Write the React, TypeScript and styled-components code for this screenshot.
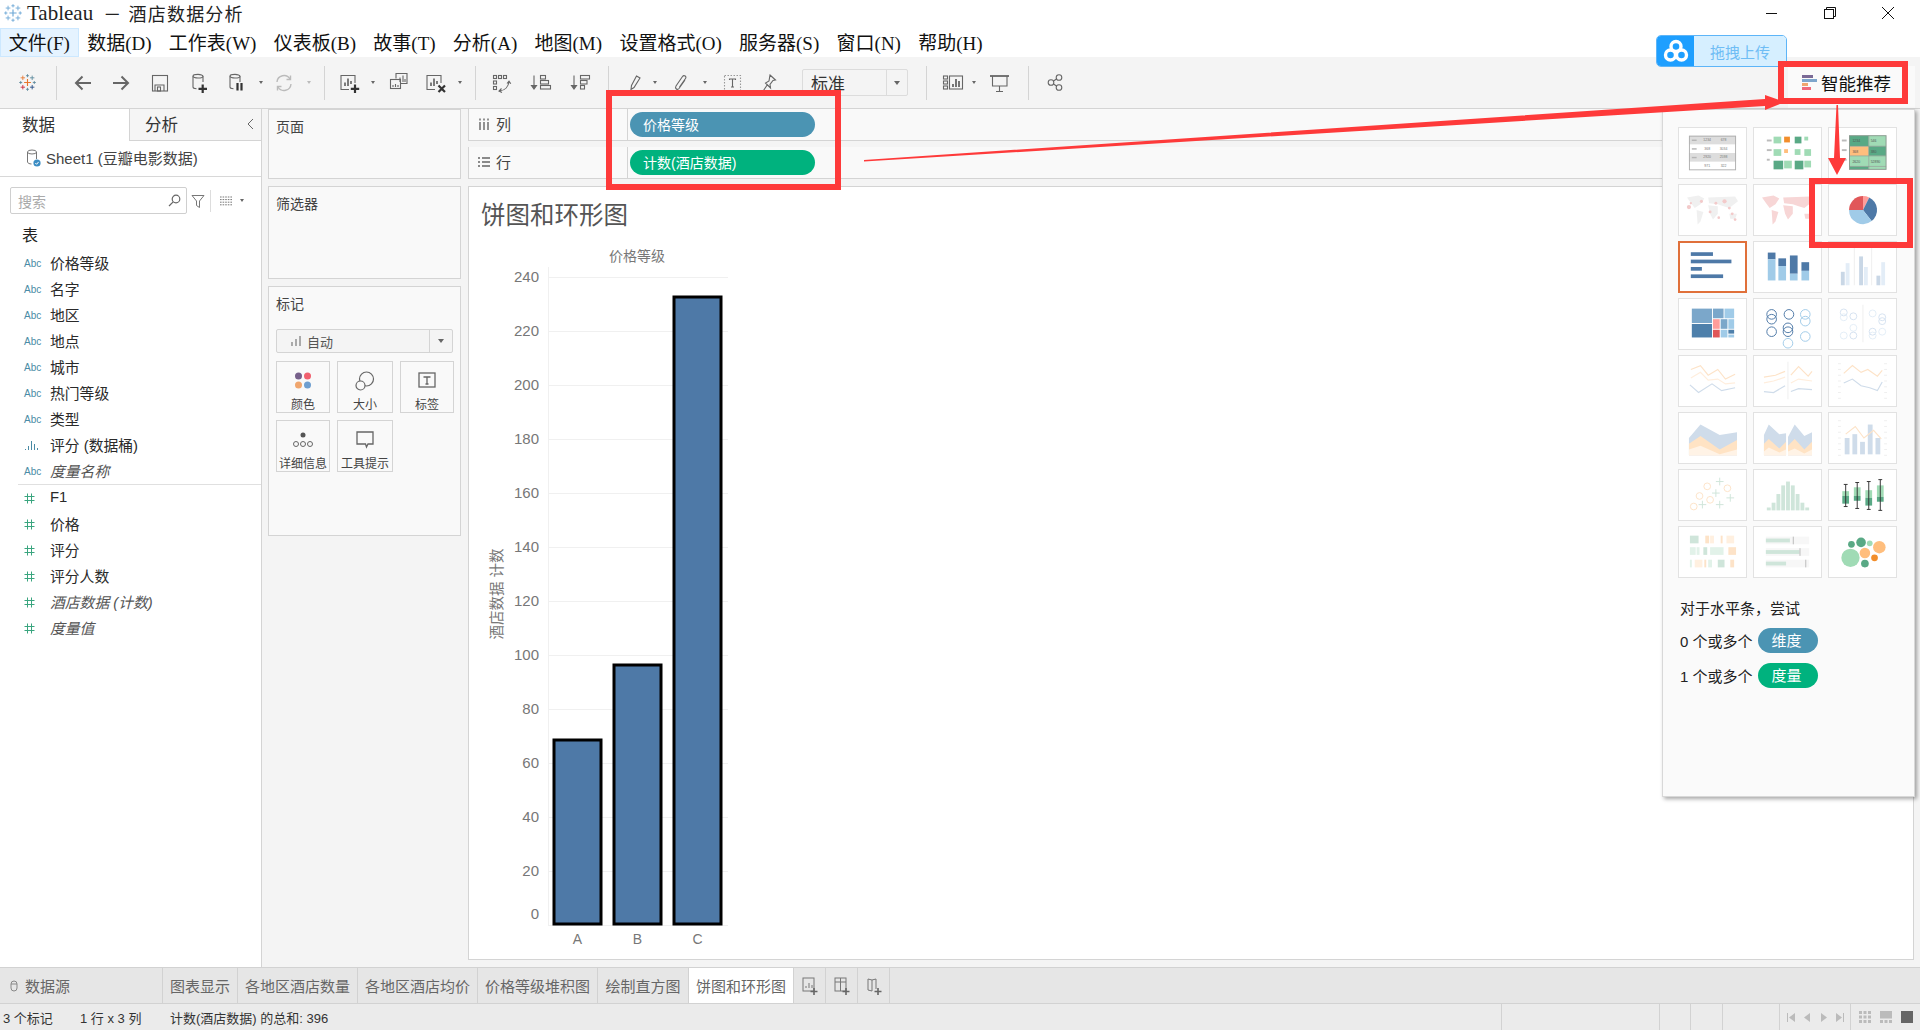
import React from 'react';
import styled, { createGlobalStyle } from 'styled-components';

const GlobalStyle = createGlobalStyle`
  html, body { margin: 0; padding: 0; background: #fff; }
  body { font-family: 'Liberation Sans', 'Noto Sans CJK SC', sans-serif; color: #333; }
  #root { width: 1920px; height: 1030px; overflow: hidden; }
`;

const Page = styled.div`
  position: relative;
  width: 1920px;
  height: 1030px;
  display: flex;
  flex-direction: column;
  overflow: hidden;
`;

/* ---------- window chrome ---------- */

const TitleBar = styled.div`
  height: 28px;
  box-sizing: border-box;
  display: flex;
  align-items: center;
  padding: 0 0 2px 4px;
  background: #fff;
  color: #222;
`;

const TitleName = styled.span`
  margin-left: 5px;
  font-family: 'Liberation Serif', 'Noto Sans CJK SC', serif;
  font-size: 21px;
`;

const TitleDoc = styled.span`
  margin-left: 10px;
  font-size: 18px;
  letter-spacing: 1.2px;
`;

const WindowButtons = styled.div`
  margin-left: auto;
  display: flex;
  align-items: center;
  padding-right: 25px;
  gap: 44px;
  color: #111;
`;

const MenuBar = styled.div`
  height: 29px;
  display: flex;
  background: #fff;
  font-family: 'Liberation Serif', 'Noto Sans CJK SC', serif;
  font-size: 19px;
  color: #111;
`;

const MenuItem = styled.div<{ $active?: boolean }>`
  display: flex;
  align-items: center;
  padding: 0 7.65px 3px;
  white-space: nowrap;
  border: 1px solid ${({ $active }) => ($active ? '#cce8ff' : 'transparent')};
  background: ${({ $active }) => ($active ? '#e5f3ff' : 'transparent')};
`;

const Toolbar = styled.div`
  height: 51px;
  display: flex;
  align-items: center;
  padding-left: 14px;
  background: #f4f4f4;
`;

const Tool = styled.div<{ $w: number; $ml?: number }>`
  width: ${({ $w }) => $w}px;
  margin-left: ${({ $ml }) => $ml ?? 0}px;
  height: 30px;
  flex: none;
  display: flex;
  align-items: center;
  justify-content: center;
`;

const ToolSep = styled.div<{ $ml?: number }>`
  width: 1px;
  height: 34px;
  flex: none;
  margin-left: ${({ $ml }) => $ml ?? 0}px;
  background: #d4d4d4;
`;

const Caret = styled.div<{ $ml?: number; $w?: number; $c?: string }>`
  width: ${({ $w }) => $w ?? 10}px;
  margin-left: ${({ $ml }) => $ml ?? 0}px;
  flex: none;
  display: flex;
  justify-content: center;
  &::after {
    content: '';
    border-left: 2.5px solid transparent;
    border-right: 2.5px solid transparent;
    border-top: 3.5px solid ${({ $c }) => $c ?? '#666'};
  }
`;

const Combo = styled.div`
  width: 106px;
  height: 27px;
  margin-left: 19px;
  flex: none;
  box-sizing: border-box;
  display: flex;
  align-items: center;
  justify-content: space-between;
  padding-left: 8px;
  background: #f4f4f4;
  border: 1px solid #dcdcdc;
  border-radius: 2px;
  font-size: 17px;
  color: #333;
`;

const ComboArrow = styled.div`
  width: 20px;
  height: 100%;
  border-left: 1px solid #dcdcdc;
  display: flex;
  align-items: center;
  justify-content: center;
  &::after {
    content: '';
    border-left: 3.5px solid transparent;
    border-right: 3.5px solid transparent;
    border-top: 4.5px solid #666;
  }
`;

const ShowMeButton = styled.div`
  margin-left: auto;
  margin-right: 5px;
  align-self: flex-end;
  width: 127px;
  height: 42px;
  box-sizing: border-box;
  display: flex;
  align-items: center;
  gap: 4px;
  padding: 0 0 9px 14px;
  background: #fafafa;
  font-size: 17.5px;
  color: #111;
`;

/* ---------- upload widget ---------- */

const UploadWidget = styled.div`
  position: absolute;
  left: 1656px;
  top: 35px;
  width: 131px;
  height: 32px;
  box-sizing: border-box;
  display: flex;
  border: 1px solid #5db5f8;
  border-radius: 5px;
  overflow: hidden;
  z-index: 3;
`;

const UploadIcon = styled.div`
  width: 37px;
  background: #1e9fff;
  display: flex;
  align-items: center;
  justify-content: center;
`;

const UploadText = styled.div`
  flex: 1;
  background: #d6efff;
  color: #6fbdf5;
  font-size: 15px;
  display: flex;
  align-items: center;
  justify-content: center;
`;

/* ---------- main area ---------- */

const Main = styled.div`
  position: relative;
  flex: 1;
  min-height: 0;
  display: flex;
  background: #f4f4f4;
  border-top: 1px solid #d4d4d4;
  box-sizing: border-box;
`;

const DataPane = styled.div`
  width: 262px;
  flex: none;
  box-sizing: border-box;
  background: #fff;
  border-right: 1px solid #d4d4d4;
`;

const PaneTabs = styled.div`
  height: 32px;
  display: flex;
`;

const PaneTab = styled.div<{ $active?: boolean }>`
  width: ${({ $active }) => ($active ? '129px' : '132px')};
  box-sizing: border-box;
  display: flex;
  align-items: center;
  justify-content: space-between;
  padding: 0 7px 2px ${({ $active }) => ($active ? '22px' : '15px')};
  font-size: 16.5px;
  color: #333;
  background: ${({ $active }) => ($active ? '#fff' : '#f5f5f5')};
  border-left: ${({ $active }) => ($active ? 'none' : '1px solid #d4d4d4')};
  border-bottom: ${({ $active }) => ($active ? 'none' : '1px solid #d4d4d4')};
`;

const SourceRow = styled.div`
  height: 36px;
  box-sizing: border-box;
  display: flex;
  align-items: center;
  gap: 3px;
  padding: 0 0 2px 25px;
  font-size: 15px;
  color: #444;
  border-bottom: 1px solid #d8d8d8;
`;

const SearchRow = styled.div`
  display: flex;
  align-items: center;
  padding: 10px 0 0 10px;
`;

const SearchBox = styled.div`
  width: 177px;
  height: 27px;
  box-sizing: border-box;
  display: flex;
  align-items: center;
  justify-content: space-between;
  padding: 0 5px 0 7px;
  border: 1px solid #cfcfcf;
  border-radius: 2px;
  font-size: 14px;
  color: #aaa;
`;

const SearchTool = styled.div`
  display: flex;
  align-items: center;
  margin-left: 4px;
`;

const SearchDivider = styled.div`
  width: 1px;
  height: 22px;
  background: #ddd;
  margin: 0 5px 0 5px;
`;

const TablesHeading = styled.div`
  height: 30px;
  margin-top: 6px;
  padding: 0 0 2px 22px;
  box-sizing: border-box;
  display: flex;
  align-items: center;
  font-size: 16px;
  color: #222;
`;

const FieldList = styled.div<{ $divided?: boolean }>`
  margin-left: 18px;
  padding-bottom: ${({ $divided }) => ($divided ? '0' : '2px')};
  border-bottom: ${({ $divided }) => ($divided ? '1px solid #e0e0e0' : 'none')};
`;

const FieldRow = styled.div<{ $italic?: boolean }>`
  height: 26px;
  box-sizing: border-box;
  padding-bottom: 2px;
  display: flex;
  align-items: center;
  font-size: 14.8px;
  color: ${({ $italic }) => ($italic ? '#555' : '#2a2a2a')};
  font-style: ${({ $italic }) => ($italic ? 'italic' : 'normal')};
`;

const FieldType = styled.span<{ $measure?: boolean }>`
  width: 32px;
  flex: none;
  padding: 2px 0 0 6px;
  box-sizing: border-box;
  font-style: normal;
  display: flex;
  align-items: center;
  font-size: ${({ $measure }) => ($measure ? '14px' : '10px')};
  color: ${({ $measure }) => ($measure ? '#3aa57f' : '#4a8ba5')};
`;

const Side = styled.div`
  width: 193px;
  flex: none;
  margin-left: 6px;
  display: flex;
  flex-direction: column;
  gap: 7px;
`;

const SideCard = styled.div<{ $h: number }>`
  height: ${({ $h }) => $h}px;
  box-sizing: border-box;
  background: #f9f9f9;
  border: 1px solid #d4d4d4;
  padding: 6px 7px;
  font-size: 14px;
  color: #444;
`;

const CardTitle = styled.div`
  line-height: 23px;
`;

const MarkSelect = styled.div`
  height: 24px;
  margin-top: 13px;
  box-sizing: border-box;
  display: flex;
  align-items: center;
  padding-left: 13px;
  gap: 5px;
  background: #f4f4f4;
  border: 1px solid #d4d4d4;
  border-radius: 2px;
  font-size: 13px;
  color: #555;
`;

const MarkArrow = styled.div`
  margin-left: auto;
  width: 22px;
  height: 100%;
  border-left: 1px solid #d4d4d4;
  display: flex;
  align-items: center;
  justify-content: center;
  &::after {
    content: '';
    border-left: 3.5px solid transparent;
    border-right: 3.5px solid transparent;
    border-top: 4px solid #666;
  }
`;

const MarkGrid = styled.div`
  margin-top: 8px;
  display: grid;
  grid-template-columns: 54px 56px 54px;
  grid-auto-rows: 52px;
  gap: 7px;
`;

const MarkButton = styled.div`
  box-sizing: border-box;
  border: 1px solid #d4d4d4;
  background: #f9f9f9;
  display: flex;
  flex-direction: column;
  align-items: center;
  font-size: 12px;
  color: #444;
  padding-top: 7px;
  svg { flex: none; height: 24px; }
  span { margin-top: 2px; white-space: nowrap; }
`;

const Workspace = styled.div`
  flex: 1;
  min-width: 0;
  margin: 0 6px 7px 7px;
  display: flex;
  flex-direction: column;
`;

const Shelf = styled.div`
  height: 32px;
  flex: none;
  box-sizing: border-box;
  display: flex;
  background: #f9f9f9;
  border: 1px solid #d4d4d4;
  border-top: none;
  margin-bottom: 6px;
  font-size: 15px;
  color: #444;
`;

const ShelfLabel = styled.div`
  width: 159px;
  flex: none;
  box-sizing: border-box;
  display: flex;
  align-items: center;
  gap: 6px;
  padding: 0 0 2px 9px;
  border-right: 1px solid #d4d4d4;
`;

const Pill = styled.div<{ $kind: 'dim' | 'measure'; $w?: number }>`
  width: ${({ $w }) => $w ?? 185}px;
  height: 25px;
  flex: none;
  box-sizing: border-box;
  padding-bottom: 2px;
  border-radius: 13px;
  display: flex;
  align-items: center;
  color: #fff;
  font-size: 14px;
  background: ${({ $kind }) => ($kind === 'dim' ? '#4b94b3' : '#00b27e')};
`;

const ShelfPill = styled(Pill)`
  margin: 3px 0 0 2px;
  padding-left: 13px;
`;

const ChartCard = styled.div`
  flex: 1;
  min-height: 0;
  margin-top: 1px;
  box-sizing: border-box;
  background: #fff;
  border: 1px solid #d4d4d4;
  overflow: hidden;
`;

const ChartTitle = styled.div`
  padding: 14px 0 0 12px;
  height: 52px;
  box-sizing: border-box;
  font-size: 24.5px;
  line-height: 30px;
  color: #555;
`;

const ChartSvg = styled.svg`
  display: block;
  font-family: 'Liberation Sans', 'Noto Sans CJK SC', sans-serif;
`;

/* ---------- show me panel ---------- */

const ShowMePanel = styled.div`
  position: absolute;
  top: 0;
  right: 5px;
  width: 253px;
  height: 688px;
  box-sizing: border-box;
  padding: 17px 0 0 15px;
  background: #fafafa;
  border: 1px solid #d8d8d8;
  box-shadow: 2px 2px 4px rgba(0, 0, 0, 0.35);
  font-size: 15px;
  color: #222;
  z-index: 2;
`;

const ThumbGrid = styled.div`
  display: grid;
  grid-template-columns: repeat(3, 69px);
  grid-auto-rows: 52px;
  column-gap: 6px;
  row-gap: 5px;
`;

const Thumb = styled.svg<{ $selected?: boolean }>`
  width: 69px;
  height: 52px;
  box-sizing: border-box;
  display: block;
  background: #fff;
  border: ${({ $selected }) => ($selected ? '2px solid #e0703a' : '1px solid #e2e2e2')};
  overflow: hidden;
`;

const HintBlock = styled.div`
  margin: 21px 0 0 2px;
  display: flex;
  flex-direction: column;
`;

const HintRow = styled.div`
  display: flex;
  align-items: center;
  height: 25px;
  margin-bottom: 10px;
  gap: 5px;
`;

const HintHead = styled.div`
  line-height: 20px;
  margin-bottom: 9px;
`;

const HintPill = styled(Pill)`
  justify-content: center;
  padding-right: 2px;
  font-size: 15px;
`;

/* ---------- sheet tabs and status ---------- */

const TabBar = styled.div`
  height: 37px;
  flex: none;
  box-sizing: border-box;
  display: flex;
  background: #e6e6e6;
  border-top: 1px solid #d2d2d2;
  border-bottom: 1px solid #d2d2d2;
  font-size: 15px;
  color: #666;
`;

const SheetTab = styled.div<{ $w: number; $active?: boolean }>`
  width: ${({ $w }) => $w}px;
  flex: none;
  box-sizing: border-box;
  display: flex;
  align-items: center;
  justify-content: center;
  white-space: nowrap;
  border-right: 1px solid #d2d2d2;
  background: ${({ $active }) => ($active ? '#fff' : 'transparent')};
`;

const SourceTab = styled(SheetTab)`
  justify-content: flex-start;
  gap: 7px;
  padding-left: 10px;
`;

const StatusBar = styled.div`
  height: 26px;
  flex: none;
  display: flex;
  background: #ebebeb;
  font-size: 13px;
  color: #333;
`;

const StatusText = styled.div`
  width: 1501px;
  flex: none;
  display: flex;
  align-items: center;
  padding-left: 3px;
  box-sizing: border-box;
  white-space: pre;
`;

const StatusPart = styled.span<{ $w: number }>`
  width: ${({ $w }) => $w}px;
  flex: none;
`;

const StatusCell = styled.div<{ $w: number }>`
  width: ${({ $w }) => $w}px;
  flex: none;
  box-sizing: border-box;
  border-left: 1px solid #d2d2d2;
  display: flex;
  align-items: center;
  justify-content: space-around;
  padding: 0 3px;
`;

/* ---------- red marks drawn on top of the screenshot ---------- */

const RedBox = styled.div<{ $x: number; $y: number; $w: number; $h: number }>`
  position: absolute;
  left: ${({ $x }) => $x}px;
  top: ${({ $y }) => $y}px;
  width: ${({ $w }) => $w}px;
  height: ${({ $h }) => $h}px;
  box-sizing: border-box;
  border: 6px solid #fe3a3a;
  pointer-events: none;
  z-index: 5;
`;

const ArrowLayer = styled.svg`
  position: absolute;
  left: 0;
  top: 0;
  width: 1920px;
  height: 1030px;
  pointer-events: none;
  z-index: 6;
`;

/* ---------- icons ---------- */

const IconSvg = styled.svg`
  overflow: visible;
`;

const Ico = ({ children, w = 20 }: { children: React.ReactNode; w?: number }) => (
  <IconSvg width={w} height="20" viewBox={`0 0 ${w} 20`} fill="none" stroke="#666" strokeWidth="1.1">
    {children}
  </IconSvg>
);

const TableauMark = ({ size = 17, mono }: { size?: number; mono?: string }) => {
  const plus = (x: number, y: number, r: number, c: string, sw = 1) => (
    <path d={`M${x - r} ${y}H${x + r}M${x} ${y - r}V${y + r}`} stroke={mono ?? c} strokeWidth={sw} />
  );
  return (
    <svg width={size} height={size} viewBox="0 0 20 20" fill="none">
      {plus(10, 10, 4, '#e8762d', 1.3)}
      {plus(10, 2, 1.8, '#5b879b')}
      {plus(10, 18, 1.8, '#5b879b')}
      {plus(2, 10, 1.8, '#5b879b')}
      {plus(18, 10, 1.8, '#5b879b')}
      {plus(4.5, 4.5, 2.6, '#e8762d')}
      {plus(15.5, 4.5, 2.6, '#59879b')}
      {plus(4.5, 15.5, 2.6, '#c72035')}
      {plus(15.5, 15.5, 2.6, '#1f447e')}
    </svg>
  );
};

const Cyl = ({ children }: { children?: React.ReactNode }) => (
  <Ico>
    <ellipse cx="8" cy="3.2" rx="5" ry="1.8" />
    <path d="M3 3.2V14c0 1 1.5 1.700 3.5 1.700M13 3.2V9" />
    {children}
  </Ico>
);

const BarBox = ({ children }: { children?: React.ReactNode }) => (
  <Ico>
    <path d="M15 10V2.5H1V16.5H9" />
    <path d="M5 13V9.5M8 13V5.5M11 11V8" strokeWidth="1.7" />
    {children}
  </Ico>
);

const FieldHash = () => (
  <svg width="11" height="11" viewBox="0 0 11 11" stroke="#3aa57f" strokeWidth="1">
    <path d="M3.5 0.5V10.5M7.5 0.5V10.5M0.5 3.5H10.5M0.5 7.5H10.5" />
  </svg>
);

const FieldBins = () => (
  <svg width="16" height="12" viewBox="0 0 16 12" stroke="#4a8ba5" strokeWidth="1">
    <path d="M1.5 11v-1M4.5 11V7M7.5 11V2M10.5 11V5M13.5 11v-2" />
  </svg>
);

const AddSheetIcon = ({ children }: { children: React.ReactNode }) => (
  <svg width="18" height="20" viewBox="0 0 18 20" fill="none" stroke="#777" strokeWidth="1">
    {children}
    <path d="M13 12v7M9.5 15.5h7" stroke="#666" strokeWidth="1.6" />
  </svg>
);

const PageIcon = ({ d }: { d: string }) => (
  <svg width="11" height="11" viewBox="0 0 11 11">
    <path d={d} fill="#bbb" />
  </svg>
);

/* ---------- show me thumbnails, drawn in card pixels ---------- */

const TD = '#59a985';
const TL = '#a0dbb5';
const OR = '#f28e2b';
const OL = '#ffbe7d';
const BD = '#4e79a7';
const BL = '#a0cbe8';
const FB = '#cfdcea';
const FO = '#fde3c8';
const FG = '#cfe5da';

type R = [number, number, number, number, string];

const Rects = ({ items }: { items: R[] }) => (
  <>
    {items.map(([x, y, w, h, fill], i) => (
      <rect key={i} x={x} y={y} width={w} height={h} fill={fill} />
    ))}
  </>
);

const Rings = ({ items, r = 5 }: { items: [number, number, string][]; r?: number }) => (
  <>
    {items.map(([cx, cy, stroke], i) => (
      <circle key={i} cx={cx} cy={cy} r={r} fill="none" stroke={stroke} strokeWidth="1" />
    ))}
  </>
);

const Lines = ({ items }: { items: [string, string][] }) => (
  <>
    {items.map(([points, stroke], i) => (
      <polyline key={i} points={points} fill="none" stroke={stroke} strokeWidth="1.2" />
    ))}
  </>
);

const Ticks = ({ x }: { x: number }) => (
  <>
    {[8, 14, 20, 26, 32, 38, 44].map(y => (
      <path key={y} d={`M${x} ${y}h3`} stroke="#eee" strokeWidth="1" />
    ))}
  </>
);

const Cells = ({ rows }: { rows: string[][] }) => (
  <g fontSize="3.6" fill="#777" fontFamily="Liberation Sans, sans-serif" textAnchor="middle">
    {rows.map((row, i) => (
      <g key={i}>
        <text x="29" y={13.5 + i * 9}>{row[0]}</text>
        <text x="46" y={13.5 + i * 9}>{row[1]}</text>
      </g>
    ))}
  </g>
);

const WORLD =
  'M8 13L20 11L26 14L22 20L16 24L13 20ZM18 26L25 28L22 38L19 41ZM30 13L58 12L61 17L52 24L46 22L40 20L31 19ZM30 21L40 22L40 30L35 36L32 30ZM52 30L60 30L58 35L53 35Z';

const THUMBS: React.ReactNode[] = [
  <>
    <Rects items={[[10, 8, 49, 9, '#ddd'], [10, 26, 49, 9, '#ddd'], [13, 12, 5, 1.5, '#b5b5b5'], [13, 21, 5, 1.5, '#b5b5b5'], [13, 30, 5, 1.5, '#b5b5b5']]} />
    <rect x="10.5" y="8.5" width="48" height="35" fill="none" stroke="#b0b0b0" />
    <Cells rows={[['1234', '678'], ['368', '3034'], ['2920', '2598'], ['971', '322']]} />
  </>,
  <>
    <Rects
      items={[
        [13, 12, 5, 2, '#bbb'], [13, 22, 5, 2, '#bbb'], [13, 32, 3, 2, '#bbb'],
        [20, 9, 8, 7, TL], [31, 9, 6, 6, OR], [42, 9, 7, 7, TD], [52, 9, 4, 4, TL],
        [20, 22, 8, 7, TL], [31, 22, 4, 4, OL], [42, 22, 6, 6, TL], [52, 22, 7, 7, TL],
        [20, 34, 10, 9, TD], [31, 34, 8, 8, TL], [42, 34, 9, 9, TD], [52, 34, 7, 7, TL],
      ]}
    />
  </>,
  <>
    <Rects
      items={[
        [13, 12, 5, 2, '#bbb'], [13, 22, 5, 2, '#bbb'], [13, 32, 5, 2, '#bbb'],
        [21, 8, 20, 11, TD], [41, 8, 18, 11, TL],
        [21, 19, 20, 10, OL], [41, 19, 18, 10, TD],
        [21, 29, 20, 11, TL], [41, 29, 18, 11, TL],
        [21, 40, 20, 3, TD], [41, 40, 18, 3, TL],
      ]}
    />
    <rect x="21" y="8" width="38" height="35" fill="none" stroke="#8a9a90" />
    <path d="M41 8V43M21 19H59M21 29H59M21 40H59" stroke="#8a9a90" strokeWidth=".7" />
    <g fontSize="3.6" fill="#555" fontFamily="Liberation Sans, sans-serif">
      <text x="24" y="14.5">1234</text><text x="43" y="14.5">546</text>
      <text x="24" y="25.5">368</text><text x="43" y="25.5">380</text>
      <text x="24" y="36">2620</text><text x="43" y="36">52890</text>
    </g>
  </>,
  <>
    <path d={WORLD} fill="#f0f0f0" />
    {[[10, 23, 2.2], [12, 19, 1.2], [23, 17, 1.6], [32, 28, 1.5], [38, 19, 1.5], [47, 17, 2.2], [52, 24, 1.5], [55, 30, 1.5], [41, 34, 1.4], [58, 36, 1.4]].map(([cx, cy, r], i) => (
      <circle key={i} cx={cx} cy={cy} r={r} fill="#f3caca" />
    ))}
  </>,
  <path d={WORLD} fill="#f7d6d6" />,
  <>
    <path d="M35 26L35 11.5A14.5 14.5 0 0 1 41.5 13Z" fill="#ff9d9a" />
    <path d="M35 26L41.5 13A14.5 14.5 0 0 1 44 37.5Z" fill={BD} />
    <path d="M35 26L44 37.5A14.5 14.5 0 0 1 20.5 26Z" fill={BL} />
    <path d="M35 26L20.5 26A14.5 14.5 0 0 1 35 11.5Z" fill="#e15759" />
  </>,
  <Rects items={[[11, 10, 24, 4, BD], [11, 18, 44, 4, BD], [11, 26, 12, 4, BD], [11, 34, 35, 4, BD]]} />,
  <Rects
    items={[
      [14, 11, 8, 7, BD], [14, 18, 8, 22, BL],
      [25, 17, 8, 8, BD], [25, 25, 8, 15, BL],
      [37, 14, 8, 19, BD], [37, 33, 8, 7, BL],
      [49, 21, 8, 9, BD], [49, 30, 8, 10, BL],
    ]}
  />,
  <>
    <Rects
      items={[
        [12, 31, 4, 14, '#c9d7e6'], [17, 22, 4, 23, '#e3edf7'],
        [31, 15, 4, 30, '#c9d7e6'], [36, 26, 4, 19, '#e3edf7'],
        [49, 35, 4, 10, '#c9d7e6'], [54, 21, 4, 24, '#e3edf7'],
      ]}
    />
    <path d="M26 6V45M44 6V45" stroke="#eee" strokeWidth="1" />
  </>,
  <Rects
    items={[
      [13, 10, 21, 15, '#7ba7ca'], [13, 26, 21, 14, '#4e80ab'], [35, 10, 11, 10, '#7ba7ca'], [47, 10, 10, 10, BL],
      [35, 21, 7, 10, '#ff9d9a'], [43, 21, 7, 10, '#7ba7ca'], [51, 21, 6, 10, BL],
      [35, 32, 7, 8, '#e15759'], [43, 32, 7, 8, BL], [51, 32, 6, 4, '#4e80ab'], [51, 37, 6, 3, BL],
    ]}
  />,
  <Rings
    items={[
      [18, 16, BD], [18, 21, BD], [36, 16, BD], [53, 16, BL], [53, 23, BL],
      [18, 34, BD], [35, 30, BD], [35, 34, BD], [35, 46, BL], [53, 39, BL],
    ]}
  />,
  <>
    <Rings
      items={[
        [15, 14, '#d5e2f0'], [15, 19, '#e3edf7'], [25, 18, '#d5e2f0'], [25, 30, '#e3edf7'], [15, 38, '#e3edf7'], [25, 38, '#d5e2f0'],
        [45, 15, '#e3edf7'], [55, 19, '#d5e2f0'], [55, 23, '#d5e2f0'], [45, 34, '#d5e2f0'], [45, 38, '#e3edf7'], [55, 34, '#e3edf7'],
      ]}
      r={3.6}
    />
    <path d="M35 6V45" stroke="#eee" strokeWidth="1" />
  </>,
  <Lines items={[['12,14 22,10 30,20 40,14 48,24 58,19', FO], ['12,23 22,17 30,25 40,24 48,29 58,28', '#ffeedd'], ['11,30 20,38 34,29 44,36 58,33', FB]]} />,
  <>
    <path d="M35 6V45" stroke="#eee" strokeWidth="1" />
    <Lines items={[['10,22 22,20 32,16', FO], ['10,28 20,26 32,22', '#ffeedd'], ['10,37 20,38 32,31', FB], ['38,20 46,11 56,21 60,16', FO], ['38,28 46,24 60,26', '#ffeedd'], ['38,37 46,34 60,35', FB]]} />
  </>,
  <>
    <Ticks x={9} />
    <Ticks x={57} />
    <Lines items={[['15,18 24,10 33,17 40,14 50,21 55,15', FO], ['15,28 24,24 33,31 42,33 50,36 55,27', FB]]} />
  </>,
  <>
    <polygon points="10,26 22,12 42,23 60,20 60,44 10,44" fill={FB} />
    <polygon points="10,32 22,24 42,38 60,28 60,44 10,44" fill="#ffe3c4" />
    <polygon points="10,38 22,34 42,43 60,38 60,44 10,44" fill="#fff3e6" />
  </>,
  <>
    <polygon points="10,23 15,12 26,22 33,21 33,44 10,44" fill={FB} />
    <polygon points="10,32 15,27 26,37 33,30 33,44 10,44" fill="#ffe3c4" />
    <polygon points="10,40 15,36 26,41 33,38 33,44 10,44" fill="#fff3e6" />
    <polygon points="35,25 42,12 52,24 60,20 60,44 35,44" fill={FB} />
    <polygon points="35,34 42,27 52,38 60,30 60,44 35,44" fill="#ffe3c4" />
    <polygon points="35,40 42,37 52,42 60,38 60,44 35,44" fill="#fff3e6" />
  </>,
  <>
    <Ticks x={9} />
    <Ticks x={57} />
    <Rects items={[[16, 26, 5, 17, FB], [24, 22, 5, 21, FB], [32, 30, 5, 13, FB], [40, 12, 5, 31, FB], [48, 26, 5, 17, FB]]} />
    <Lines items={[['17,22 27,14 36,26 46,18 54,27', FO]]} />
  </>,
  <>
    <Rings items={[[29, 17, FO], [50, 19, FO], [21, 27, FO], [32, 31, FO], [15, 38, FO]]} r={3.5} />
    {[[42, 12], [38, 24], [53, 29], [24, 36], [42, 36]].map(([x, y]) => (
      <path key={`${x}-${y}`} d={`M${x - 4} ${y}h8M${x} ${y - 4}v8`} stroke={FG} strokeWidth="1" />
    ))}
  </>,
  <Rects items={[[13, 39, 4, 3, FG], [18, 34, 4, 8, FG], [23, 25, 4, 17, FG], [28, 16, 4, 26, FG], [33, 12, 4, 30, FG], [38, 16, 4, 26, FG], [43, 25, 4, 17, FG], [48, 34, 4, 8, FG], [53, 39, 4, 3, FG]]} />,
  <>
    <Rects
      items={[
        [13.5, 22, 7, 5, TL], [13.5, 27, 7, 8, TD],
        [25.5, 18, 7, 9, TL], [25.5, 27, 7, 5, TD],
        [37.5, 21, 7, 8, TL], [37.5, 29, 7, 8, TD],
        [49.5, 16, 7, 12, TL], [49.5, 28, 7, 5, TD],
      ]}
    />
    <path
      d="M17 15V38M15 15h4M15 38h4M29 13V40M27 13h4M27 40h4M41 12V41M39 12h4M39 41h4M53 10V42M51 10h4M51 42h4"
      stroke="#333"
      strokeWidth="1"
    />
  </>,
  <Rects
    items={[
      [11, 9, 9, 8, FG], [27, 9, 4, 8, FO], [32, 9, 4, 8, '#fff0e0'], [43, 9, 2, 8, FO], [49, 9, 8, 8, '#fff0e0'],
      [11, 21, 6, 8, '#e2f2e9'], [18, 21, 3, 8, '#e2f2e9'], [25, 21, 4, 8, FG], [32, 21, 14, 8, '#e2f2e9'], [51, 21, 8, 8, FO],
      [11, 34, 2, 8, '#e2f2e9'], [16, 34, 8, 8, '#fff0e0'], [26, 34, 2, 8, FO], [30, 34, 4, 8, '#e2f2e9'], [40, 34, 7, 8, FG], [53, 34, 4, 8, FO],
    ]}
  />,
  <Rects
    items={[
      [12, 10, 45, 8, '#f7f7f7'], [12, 12, 25, 4, FG], [40, 10, 1, 8, '#bbb'],
      [12, 22, 45, 8, '#f7f7f7'], [12, 24, 35, 4, FG], [47, 22, 1, 8, '#bbb'],
      [12, 34, 45, 8, '#f7f7f7'], [12, 36, 21, 4, FG], [53, 34, 1, 8, '#bbb'],
    ]}
  />,
  <>
    {([[22, 32, 9.5, TL], [23, 18, 3.5, TD], [33, 16, 5, TD], [42, 17, 3, TL], [52, 21, 6.5, OL], [37, 27, 5.5, OL], [47, 32, 3.5, OR], [37, 38, 4, TD]] as [number, number, number, string][]).map(([cx, cy, r, fill], i) => (
      <circle key={i} cx={cx} cy={cy} r={r} fill={fill} />
    ))}
  </>,
];

/* ---------- data ---------- */

const MENUS = ['文件(F)', '数据(D)', '工作表(W)', '仪表板(B)', '故事(T)', '分析(A)', '地图(M)', '设置格式(O)', '服务器(S)', '窗口(N)', '帮助(H)'];

const DIMENSIONS: { name: string; italic?: boolean; bins?: boolean }[] = [
  { name: '价格等级' },
  { name: '名字' },
  { name: '地区' },
  { name: '地点' },
  { name: '城市' },
  { name: '热门等级' },
  { name: '类型' },
  { name: '评分 (数据桶)', bins: true },
  { name: '度量名称', italic: true },
];

const MEASURES: { name: string; italic?: boolean }[] = [
  { name: 'F1' },
  { name: '价格' },
  { name: '评分' },
  { name: '评分人数' },
  { name: '酒店数据 (计数)', italic: true },
  { name: '度量值', italic: true },
];

const TABS = [
  { name: '图表显示', w: 75 },
  { name: '各地区酒店数量', w: 120 },
  { name: '各地区酒店均价', w: 120 },
  { name: '价格等级堆积图', w: 120 },
  { name: '绘制直方图', w: 91 },
  { name: '饼图和环形图', w: 105, active: true },
];

const BARS = [
  { label: 'A', x: 554, top: 740 },
  { label: 'B', x: 614, top: 665 },
  { label: 'C', x: 674, top: 297 },
];

const valueY = (v: number) => 925 - v * 2.7;

const TICKS = [20, 40, 60, 80, 100, 120, 140, 160, 180, 200, 220, 240];

const BarChart = () => (
  <ChartSvg width="320" height="720" viewBox="469 239 320 720" fill="none">
    <text x="637" y="261" textAnchor="middle" fontSize="14" fill="#777">价格等级</text>
    <path d="M548.5 267V925" stroke="#f0f0f0" />
    <path d="M548 925.5H728" stroke="#f0f0f0" />
    {TICKS.map(v => (
      <g key={v}>
        <path d={`M548 ${valueY(v) + 0.5}H728`} stroke="#f0f0f0" />
        <text x="539" y={valueY(v) + 5} textAnchor="end" fontSize="15" fill="#777">{v}</text>
      </g>
    ))}
    <text x="539" y="919" textAnchor="end" fontSize="15" fill="#777">0</text>
    {BARS.map(b => (
      <g key={b.label}>
        <rect x={b.x} y={b.top} width="47" height={924 - b.top} fill="#4e79a7" stroke="#000" strokeWidth="3" />
        <text x={b.x + 23.5} y="944" textAnchor="middle" fontSize="14" fill="#777">{b.label}</text>
      </g>
    ))}
    <text transform="translate(502 594) rotate(-90)" textAnchor="middle" fontSize="14.5" fill="#777">酒店数据 计数</text>
  </ChartSvg>
);

export default function App() {
  return (
    <Page>
      <GlobalStyle />

      <TitleBar>
        <TableauMark size={18} mono="#6ea8d6" />
        <TitleName>Tableau</TitleName>
        <TitleDoc>－ 酒店数据分析</TitleDoc>
        <WindowButtons>
          <svg width="14" height="14" viewBox="0 0 14 14" stroke="#111"><path d="M1 7.5h11" /></svg>
          <svg width="14" height="14" viewBox="0 0 14 14" fill="none" stroke="#111">
            <path d="M3.5 3.5V1.5h9v9h-2" />
            <rect x="1.5" y="3.5" width="9" height="9" />
          </svg>
          <svg width="14" height="14" viewBox="0 0 14 14" stroke="#111"><path d="M1 1l12 12M13 1L1 13" /></svg>
        </WindowButtons>
      </TitleBar>

      <MenuBar>
        {MENUS.map((m, i) => (
          <MenuItem key={m} $active={i === 0}>{m}</MenuItem>
        ))}
      </MenuBar>

      <Toolbar>
        <Tool $w={26}><TableauMark /></Tool>
        <ToolSep $ml={16} />
        <Tool $w={38} $ml={7}>
          <Ico><path d="M18 10H3M9.5 3.5L3 10L9.5 16.5" strokeWidth="2" /></Ico>
        </Tool>
        <Tool $w={38}>
          <Ico><path d="M2 10H17M10.5 3.5L17 10L10.5 16.5" strokeWidth="2" /></Ico>
        </Tool>
        <Tool $w={40}>
          <Ico>
            <rect x="2.5" y="2.5" width="15" height="15.5" />
            <path d="M5 18v-6h9v6" />
            <rect x="7.5" y="14" width="3" height="4" />
          </Ico>
        </Tool>
        <Tool $w={40}>
          <Cyl><path d="M12.7 11.5v8.5M8.5 15.8H17" stroke="#333" strokeWidth="2.2" /></Cyl>
        </Tool>
        <Tool $w={34}>
          <Cyl><path d="M10.5 10v7.5M14.5 10v7.5" stroke="#333" strokeWidth="2.2" /></Cyl>
        </Tool>
        <Caret $w={14} />
        <Tool $w={32}>
          <svg width="20" height="20" viewBox="0 0 20 20" fill="none" stroke="#bbb" strokeWidth="1.4">
            <path d="M3 9a7 7 0 0 1 13-3M17 11a7 7 0 0 1-13 3" />
            <path d="M16.5 2.5V6.5H12.5M3.5 17.5V13.5H7.5" />
          </svg>
        </Tool>
        <Caret $w={18} $c="#bbb" />
        <ToolSep $ml={6} />
        <Tool $w={36} $ml={7}>
          <BarBox><path d="M15 11.5V20M10.8 15.8H19.2" stroke="#333" strokeWidth="2.2" /></BarBox>
        </Tool>
        <Caret />
        <Tool $w={40}>
          <Ico>
            <path d="M8 5.5V0.5H19V10.5H13" />
            <rect x="2.5" y="6.5" width="10" height="9" />
            <path d="M5 14v-2M7.5 14v-3M10 14v-2M12 9V4.5M15 9V2.5M17 9V6" />
          </Ico>
        </Tool>
        <Tool $w={36}>
          <BarBox><path d="M12.5 12.5l6.5 6.5M19 12.5L12.5 19" stroke="#333" strokeWidth="2.2" /></BarBox>
        </Tool>
        <Caret $w={12} />
        <ToolSep $ml={9} />
        <Tool $w={52}>
          <Ico>
            <rect x="1.5" y="2.5" width="3" height="3" />
            <rect x="6.5" y="2.5" width="3" height="3" />
            <rect x="11.5" y="2.5" width="3" height="3" />
            <rect x="1.5" y="8" width="3" height="3" />
            <rect x="1.5" y="13.5" width="3" height="3" />
            <path d="M17 8.5C16.5 13.5 13 17.5 7.5 18M15 10.5l2-2.300 1.800 2.500M9.5 15.5L7 18l3 1.500" />
          </Ico>
        </Tool>
        <Tool $w={24}>
          <Ico>
            <path d="M4 2.5V15" />
            <path d="M1.5 12.5H6.5L4 16z" fill="#666" />
            <rect x="10.5" y="2.5" width="5" height="3.5" />
            <rect x="10.5" y="7.5" width="8" height="3.5" />
            <rect x="10.5" y="12.5" width="10" height="3.5" />
          </Ico>
        </Tool>
        <Tool $w={56}>
          <Ico>
            <path d="M4 2.5V15" />
            <path d="M1.5 12.5H6.5L4 16z" fill="#666" />
            <rect x="10.5" y="2.5" width="9" height="3.5" />
            <rect x="10.5" y="7.5" width="6.5" height="3.5" />
            <rect x="10.5" y="12.5" width="4" height="3.5" />
          </Ico>
        </Tool>
        <ToolSep />
        <Tool $w={30} $ml={11}>
          <Ico><path d="M11.5 3L15 5L9 14.5L6 16.5L6.5 12.5ZM5 18.5H9" /></Ico>
        </Tool>
        <Caret />
        <Tool $w={30} $ml={5}>
          <Ico><path d="M15 7L9 15.5C7.5 17.5 4.5 15.5 6 13L12.5 3.5C14 1.5 17 3.5 15.5 5.5L9.5 14" /></Ico>
        </Tool>
        <Caret $ml={5} />
        <Tool $w={30} $ml={7}>
          <Ico>
            <rect x="2.5" y="2.5" width="16" height="15" stroke="#999" strokeDasharray="1.5 1.5" />
            <path d="M7.5 7V6H13.5V7M10.5 6V14M9 14H12" />
          </Ico>
        </Tool>
        <Tool $w={30} $ml={6}>
          <Ico><path d="M12 2L17.5 7L15 7.5L12 11.5L12.5 15L7.5 10L11 8L11.5 5ZM9.5 11.5L5.5 17.5" /></Ico>
        </Tool>
        <Combo>
          标准
          <ComboArrow />
        </Combo>
        <ToolSep $ml={18} />
        <Tool $w={30} $ml={11}>
          <Ico w={20}>
            <rect x="0.5" y="3" width="4" height="3" />
            <rect x="0.5" y="8" width="4" height="3" />
            <rect x="0.5" y="13" width="4" height="3" />
            <rect x="6.5" y="3" width="13" height="13" />
            <path d="M10 14v-3M13 14V6M16 14V8" strokeWidth="1.8" />
          </Ico>
        </Tool>
        <Caret $ml={1} />
        <Tool $w={30} $ml={5}>
          <Ico>
            <path d="M1 3H20" strokeWidth="1.8" />
            <path d="M3.5 3V13H18V3M10.5 13V18M7 18.5H14" />
          </Ico>
        </Tool>
        <ToolSep $ml={14} />
        <Tool $w={30} $ml={11}>
          <Ico>
            <circle cx="14" cy="4.5" r="2.8" />
            <circle cx="6" cy="9.5" r="2.8" />
            <circle cx="14" cy="14.5" r="2.8" />
            <path d="M8.5 8L11.5 6M8.5 11L11.5 13" />
          </Ico>
        </Tool>
        <ShowMeButton>
          <svg width="15" height="16" viewBox="0 0 15 16">
            <rect width="11" height="3" fill="#7b6a96" />
            <rect y="4" width="15" height="3" fill="#7ea6cc" />
            <rect y="8" width="6" height="3" fill="#f0a66e" />
            <rect y="12" width="9" height="3" fill="#ef6a7c" />
          </svg>
          智能推荐
        </ShowMeButton>
      </Toolbar>

      <UploadWidget>
        <UploadIcon>
          <svg width="26" height="24" viewBox="0 0 26 24" fill="none" stroke="#fff" strokeWidth="3.4">
            <circle cx="13" cy="7.5" r="5" />
            <circle cx="7.5" cy="16" r="5" />
            <circle cx="18.5" cy="16" r="5" />
          </svg>
        </UploadIcon>
        <UploadText>拖拽上传</UploadText>
      </UploadWidget>

      <Main>
        <DataPane>
          <PaneTabs>
            <PaneTab $active>数据</PaneTab>
            <PaneTab>
              分析
              <svg width="7" height="12" viewBox="0 0 7 12" fill="none" stroke="#666"><path d="M6 1L1 6l5 5" /></svg>
            </PaneTab>
          </PaneTabs>
          <SourceRow>
            <svg width="18" height="20" viewBox="0 0 18 20" fill="none" stroke="#777">
              <ellipse cx="7" cy="4" rx="4.5" ry="2" />
              <path d="M2.5 4v10c0 1 2 2 4 2M11.5 4v7" />
              <circle cx="12" cy="15" r="3.6" fill="#3b8dc4" stroke="none" />
              <path d="M10.3 15l1.3 1.3 2-2.4" stroke="#fff" />
            </svg>
            Sheet1 (豆瓣电影数据)
          </SourceRow>
          <SearchRow>
            <SearchBox>
              搜索
              <svg width="13" height="13" viewBox="0 0 13 13" fill="none" stroke="#666" strokeWidth="1.2">
                <circle cx="8" cy="5" r="3.8" />
                <path d="M5.2 7.8L1 12" />
              </svg>
            </SearchBox>
            <SearchTool>
              <svg width="14" height="14" viewBox="0 0 14 14" fill="none" stroke="#777">
                <path d="M1 1.5h12L8.5 7v6.5L5.5 11.5V7z" />
              </svg>
            </SearchTool>
            <SearchDivider />
            <SearchTool>
              <svg width="12" height="10" viewBox="0 0 12 10" stroke="#777" strokeDasharray="1.6 1">
                <path d="M0 1h12M0 3.6h12M0 6.2h12M0 8.8h12" />
              </svg>
            </SearchTool>
            <Caret $ml={5} />
          </SearchRow>
          <TablesHeading>表</TablesHeading>
          <FieldList $divided>
            {DIMENSIONS.map(f => (
              <FieldRow key={f.name} $italic={f.italic}>
                <FieldType>{f.bins ? <FieldBins /> : 'Abc'}</FieldType>
                {f.name}
              </FieldRow>
            ))}
          </FieldList>
          <FieldList>
            {MEASURES.map(f => (
              <FieldRow key={f.name} $italic={f.italic}>
                <FieldType $measure><FieldHash /></FieldType>
                {f.name}
              </FieldRow>
            ))}
          </FieldList>
        </DataPane>

        <Side>
          <SideCard $h={70}><CardTitle>页面</CardTitle></SideCard>
          <SideCard $h={93}><CardTitle>筛选器</CardTitle></SideCard>
          <SideCard $h={250}>
            <CardTitle>标记</CardTitle>
            <MarkSelect>
              <svg width="12" height="12" viewBox="0 0 12 12" stroke="#aaa" strokeWidth="2">
                <path d="M2 11V7M6 11V4M10 11V1" />
              </svg>
              自动
              <MarkArrow />
            </MarkSelect>
            <MarkGrid>
              <MarkButton>
                <svg width="20" height="24" viewBox="0 0 20 24">
                  <circle cx="5.5" cy="7" r="3.5" fill="#76608a" />
                  <circle cx="14.5" cy="7" r="3.5" fill="#f0606e" />
                  <circle cx="5.5" cy="16" r="3.5" fill="#f0a66e" />
                  <circle cx="14.5" cy="16" r="3.5" fill="#6f9fd0" />
                </svg>
                <span>颜色</span>
              </MarkButton>
              <MarkButton>
                <svg width="20" height="24" viewBox="0 0 20 24" fill="none" stroke="#666" strokeWidth="1.2">
                  <circle cx="11.5" cy="10" r="7" />
                  <circle cx="5.5" cy="16.5" r="4.5" fill="#f9f9f9" />
                </svg>
                <span>大小</span>
              </MarkButton>
              <MarkButton>
                <svg width="20" height="24" viewBox="0 0 20 24" fill="none" stroke="#666" strokeWidth="1.3">
                  <rect x="2" y="4" width="16" height="14" />
                  <path d="M6.5 8h7M10 8v7M8.5 15h3" />
                </svg>
                <span>标签</span>
              </MarkButton>
              <MarkButton>
                <svg width="22" height="24" viewBox="0 0 22 24" fill="none" stroke="#666">
                  <circle cx="11" cy="7" r="2.5" fill="#555" stroke="none" />
                  <circle cx="4" cy="16" r="2.5" />
                  <circle cx="11" cy="16" r="2.5" />
                  <circle cx="18" cy="16" r="2.5" />
                </svg>
                <span>详细信息</span>
              </MarkButton>
              <MarkButton>
                <svg width="20" height="24" viewBox="0 0 20 24" fill="none" stroke="#666" strokeWidth="1.3">
                  <path d="M2 4h16v12h-5l-1.500 3-1-3H2z" />
                </svg>
                <span>工具提示</span>
              </MarkButton>
            </MarkGrid>
          </SideCard>
        </Side>

        <Workspace>
          <Shelf>
            <ShelfLabel>
              <svg width="12" height="12" viewBox="0 0 12 12" stroke="#666" strokeWidth="1.4">
                <path d="M2 12V4M6 12V4M10 12V4M2 2.5V0.5M6 2.5V0.5M10 2.5V0.5" />
              </svg>
              列
            </ShelfLabel>
            <ShelfPill $kind="dim">价格等级</ShelfPill>
          </Shelf>
          <Shelf>
            <ShelfLabel>
              <svg width="12" height="12" viewBox="0 0 12 12" stroke="#666" strokeWidth="1.4">
                <path d="M0 2h2M0 6h2M0 10h2M4 2h8M4 6h8M4 10h8" />
              </svg>
              行
            </ShelfLabel>
            <ShelfPill $kind="measure">计数(酒店数据)</ShelfPill>
          </Shelf>
          <ChartCard>
            <ChartTitle>饼图和环形图</ChartTitle>
            <BarChart />
          </ChartCard>
        </Workspace>

        <ShowMePanel>
          <ThumbGrid>
            {THUMBS.map((t, i) => (
              <Thumb key={i} viewBox="0 0 69 52" $selected={i === 6}>{t}</Thumb>
            ))}
          </ThumbGrid>
          <HintBlock>
            <HintHead>对于水平条，尝试</HintHead>
            <HintRow>
              0 个或多个
              <HintPill $kind="dim" $w={60}>维度</HintPill>
            </HintRow>
            <HintRow>
              1 个或多个
              <HintPill $kind="measure" $w={60}>度量</HintPill>
            </HintRow>
          </HintBlock>
        </ShowMePanel>
      </Main>

      <TabBar>
        <SourceTab $w={163}>
          <svg width="8" height="12" viewBox="0 0 8 12" fill="none" stroke="#888">
            <rect x="1" y="1" width="6" height="10" rx="3" />
            <path d="M1 4h6" />
          </svg>
          数据源
        </SourceTab>
        {TABS.map(t => (
          <SheetTab key={t.name} $w={t.w} $active={t.active}>{t.name}</SheetTab>
        ))}
        <SheetTab $w={32}>
          <AddSheetIcon>
            <rect x="2" y="2" width="11" height="13" />
            <path d="M5 12v-2M8 12V7M11 12V9" />
          </AddSheetIcon>
        </SheetTab>
        <SheetTab $w={32}>
          <AddSheetIcon>
            <rect x="2" y="2" width="11" height="13" />
            <path d="M2 6h11M7.5 2v13" />
          </AddSheetIcon>
        </SheetTab>
        <SheetTab $w={32}>
          <AddSheetIcon>
            <path d="M3 3l4 1v11l-4-1zM7 4l4-1v10" />
          </AddSheetIcon>
        </SheetTab>
      </TabBar>

      <StatusBar>
        <StatusText>
          <StatusPart $w={77}>3 个标记</StatusPart>
          <StatusPart $w={90}>1 行 x 3 列</StatusPart>
          <span>计数(酒店数据) 的总和: 396</span>
        </StatusText>
        <StatusCell $w={158} />
        <StatusCell $w={31} />
        <StatusCell $w={32} />
        <StatusCell $w={57} />
        <StatusCell $w={71}>
          <PageIcon d="M1 1h1v9H1zM9 1v9L3 5.5z" />
          <PageIcon d="M8 1v9L2 5.5z" />
          <PageIcon d="M3 1v9l6-4.5z" />
          <PageIcon d="M9 1h1v9H9zM2 1v9l6-4.5z" />
        </StatusCell>
        <StatusCell $w={70}>
          <svg width="12" height="12" viewBox="0 0 12 12" fill="#bbb">
            {[0, 4.5, 9].flatMap(x => [0, 4.5, 9].map(y => <rect key={`${x}-${y}`} x={x} y={y} width="3" height="3" />))}
          </svg>
          <svg width="12" height="12" viewBox="0 0 12 12" fill="#bbb">
            <rect width="12" height="7.5" />
            <rect y="9" width="3" height="3" />
            <rect x="4.5" y="9" width="3" height="3" />
            <rect x="9" y="9" width="3" height="3" />
          </svg>
          <svg width="12" height="12" viewBox="0 0 12 12" fill="#666">
            <rect width="12" height="12" />
          </svg>
        </StatusCell>
      </StatusBar>

      <RedBox $x={606} $y={90} $w={235} $h={100} />
      <RedBox $x={1778} $y={61} $w={130} $h={43} />
      <RedBox $x={1809} $y={178} $w={104} $h={70} />
      <ArrowLayer viewBox="0 0 1920 1030">
        <polygon points="864,160 1765,99 1765,95 1785,102 1765,110 1765,106 864,161.5" fill="#fe3a3a" />
        <polygon points="1836.5,105 1838,105 1840,158 1846,158 1837,175 1828,158 1834,158" fill="#fe3a3a" />
      </ArrowLayer>
    </Page>
  );
}
